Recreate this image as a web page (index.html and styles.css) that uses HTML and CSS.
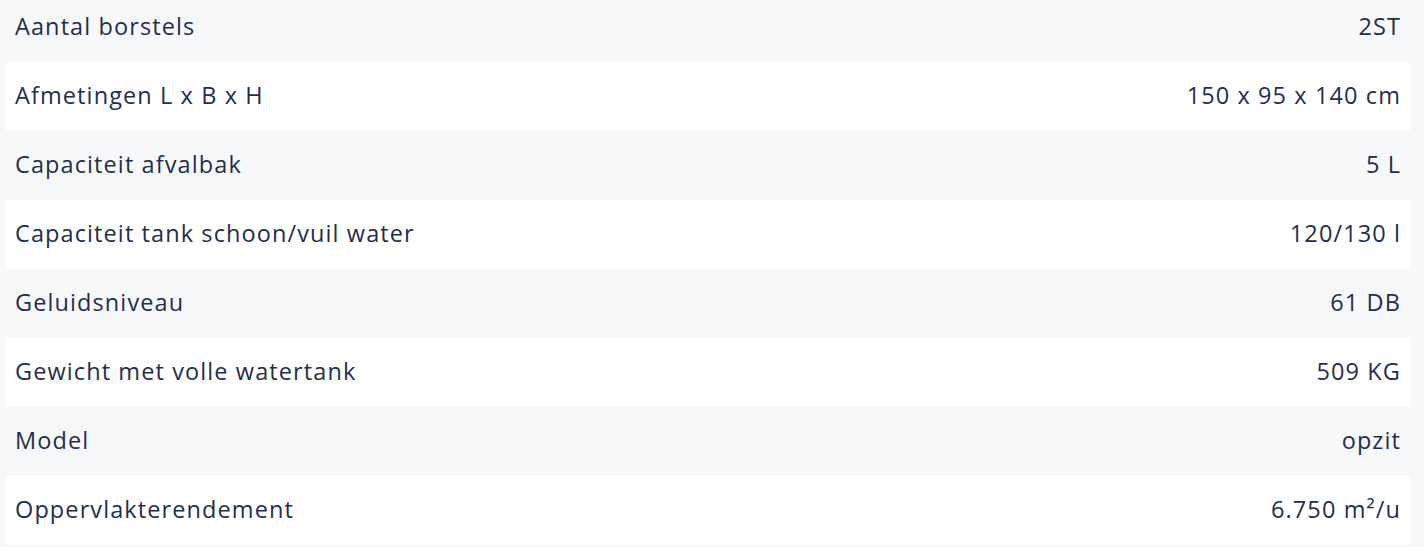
FILE: index.html
```html
<!DOCTYPE html>
<html lang="nl">
<head>
    <meta charset="UTF-8">
    <meta name="viewport" content="width=device-width, initial-scale=1.0">
    <title>Specificaties</title>
    <link rel="stylesheet" href="styles.css">
</head>
<body>
    <!-- specificaties tabel, rijen wisselen van achtergrond -->
    <div class="specs">
        <div class="spec-row"><span>Aantal borstels</span><span>2ST</span></div>
        <div class="spec-row"><span>Afmetingen L x B x H</span><span>150 x 95 x 140 cm</span></div>
        <div class="spec-row"><span>Capaciteit afvalbak</span><span>5 L</span></div>
        <div class="spec-row"><span>Capaciteit tank schoon/vuil water</span><span>120/130 l</span></div>
        <div class="spec-row"><span>Geluidsniveau</span><span>61 DB</span></div>
        <div class="spec-row"><span>Gewicht met volle watertank</span><span>509 KG</span></div>
        <div class="spec-row"><span>Model</span><span>opzit</span></div>
        <div class="spec-row"><span>Oppervlakterendement</span><span>6.750 m²/u</span></div>
    </div>
</body>
</html>
```

FILE: styles.css
```css
*, *::before, *::after {
    box-sizing: border-box;
}

html, body {
    margin: 0;
    background-color: #f7f8fa;
}

body {
    color: #1f2f4c;
    font: 23.5px/1 'Open Sans', sans-serif;
    letter-spacing: 1.1px;
    overflow: hidden;
}

.specs {
    display: flex;
    flex-direction: column;
    width: 1404px;
    margin: -7px 0 0 6px; /* page is scrolled a little into the first row */
}

.spec-row {
    display: flex;
    justify-content: space-between;
    align-items: center;
    height: 69px;
    padding: 0 10px 2px 9px;
}

.spec-row span:last-child {
    margin-right: -1px;
}

.spec-row:nth-child(even) {
    background-color: #fff;
}
```
